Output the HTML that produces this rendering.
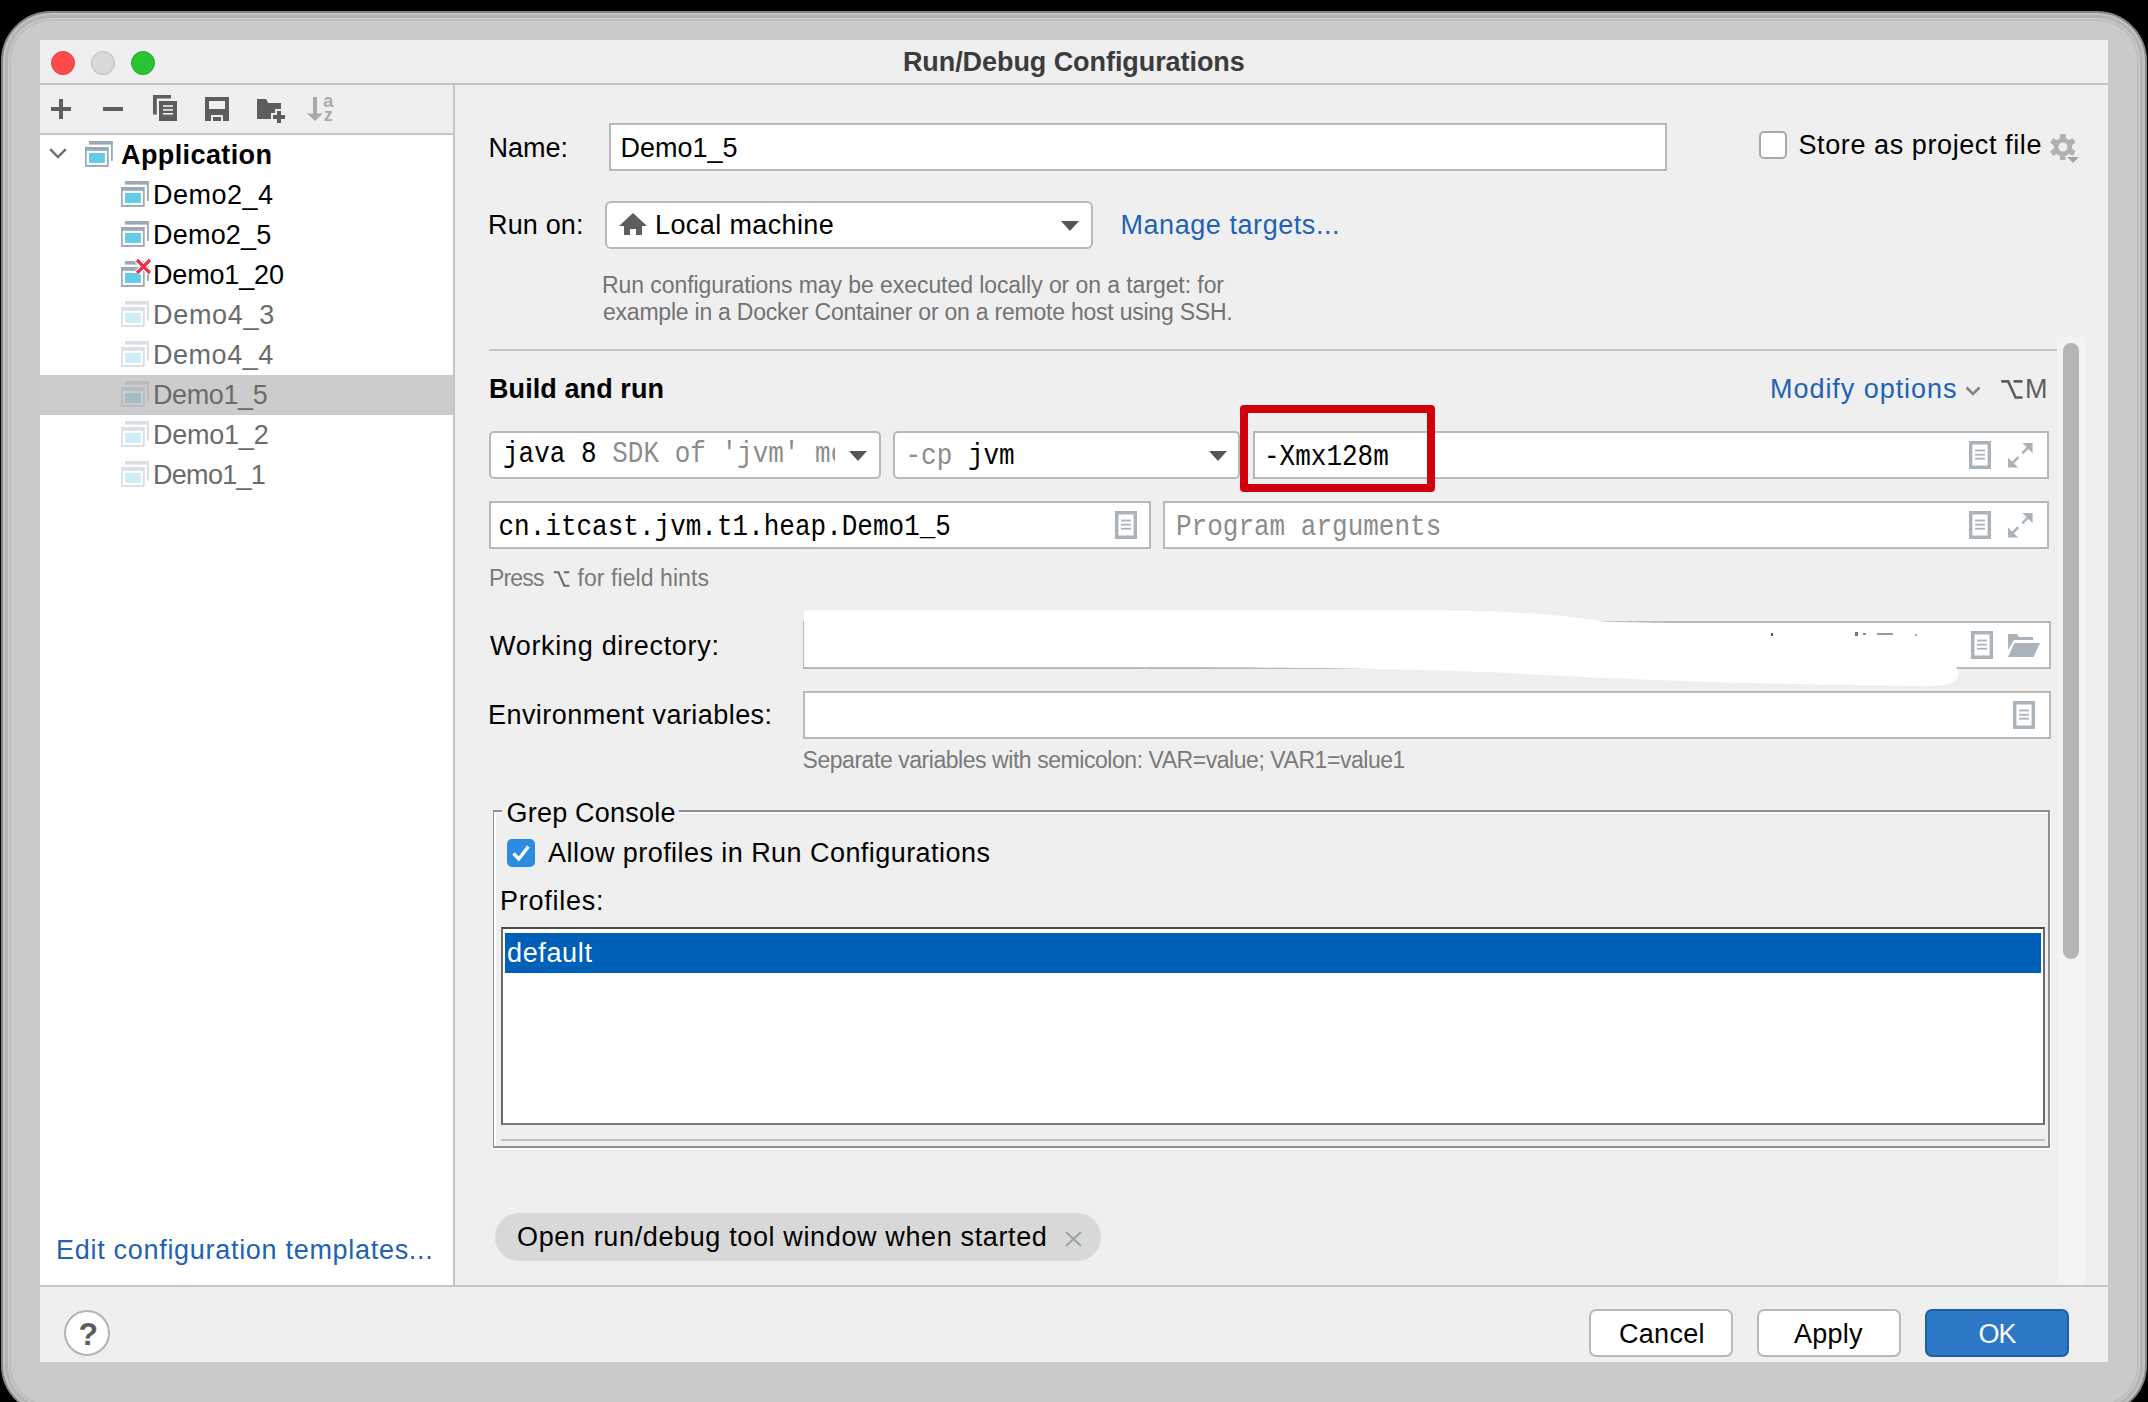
<!DOCTYPE html>
<html><head><meta charset="utf-8"><title>Run/Debug Configurations</title>
<style>
html,body{margin:0;padding:0;background:#000;}
#root{position:relative;width:2148px;height:1402px;overflow:hidden;background:#000;font-family:"Liberation Sans", sans-serif;}
.t{position:absolute;white-space:pre;}
.r{position:absolute;box-sizing:border-box;}
svg.r{overflow:visible;}
</style></head><body><div id="root">
<div class="r" style="left:1px;top:11px;width:2146px;height:1404px;background:#cacaca;border-radius:50px;border:2px solid #858585;box-shadow:inset 0 0 0 2px #c2c2c2, inset 0 0 0 5px #b4b4b4, inset 0 0 0 6px #cdcdcd, inset 0 0 0 8px #bdbdbd;"></div>
<div class="r" style="left:40px;top:40px;width:2068px;height:1322px;background:#efefef;"></div>
<div class="r" style="left:40px;top:83px;width:2068px;height:2px;background:#c6c6c6;"></div>
<div class="r" style="left:51px;top:51px;width:24px;height:24px;border-radius:50%;background:#fd4a4a;border:1px solid #e2403c;"></div>
<div class="r" style="left:91px;top:51px;width:24px;height:24px;border-radius:50%;background:#d9d9d9;border:1px solid #b9b9b9;"></div>
<div class="r" style="left:131px;top:51px;width:24px;height:24px;border-radius:50%;background:#28c432;border:1px solid #1fa82a;"></div>
<div class="t" style="left:902.9px;top:48.54px;font-size:27px;line-height:27px;font-family:'Liberation Sans', sans-serif;font-weight:bold;color:#3c3c3c;letter-spacing:-0.06799999999999999px;">Run/Debug Configurations</div>
<div class="r" style="left:40px;top:133px;width:413px;height:2px;background:#c6c6c6;"></div>
<div class="r" style="left:40px;top:135px;width:413px;height:1150px;background:#fff;"></div>
<div class="r" style="left:453px;top:85px;width:2px;height:1200px;background:#c6c6c6;"></div>
<svg class="r" style="left:51px;top:99px" width="20" height="20" viewBox="0 0 20 20"><rect x="8" y="0" width="4" height="20" fill="#5d5d5d"/><rect x="0" y="8" width="20" height="4" fill="#5d5d5d"/></svg>
<svg class="r" style="left:103px;top:107px" width="20" height="4" viewBox="0 0 20 4"><rect x="0" y="0" width="20" height="4" fill="#5d5d5d"/></svg>
<svg class="r" style="left:153px;top:95px" width="24" height="26" viewBox="0 0 24 26"><path d="M0 0H18V3.6H3.8V19.6H0Z" fill="#5d5d5d"/><rect x="6" y="6" width="18" height="20" fill="#5d5d5d"/><rect x="10" y="10.2" width="10" height="1.6" fill="#efefef"/><rect x="10" y="14.1" width="10" height="1.6" fill="#efefef"/><rect x="10" y="18" width="10" height="1.6" fill="#efefef"/></svg>
<svg class="r" style="left:205px;top:97px" width="24" height="24" viewBox="0 0 24 24"><path d="M0 0H24V24H18V18H6V24H0Z" fill="#5d5d5d"/><rect x="4" y="4" width="16" height="8" fill="#efefef"/><rect x="8" y="20" width="8" height="4" fill="#5d5d5d"/></svg>
<svg class="r" style="left:257px;top:99px" width="30" height="26" viewBox="0 0 30 26"><path d="M0 0H9L11.2 4H24V10.1H18V14H14V20H0Z" fill="#5d5d5d"/><rect x="20" y="12" width="4" height="12" fill="#5d5d5d"/><rect x="16" y="16" width="12" height="4" fill="#5d5d5d"/></svg>
<svg class="r" style="left:305px;top:96px" width="30" height="26" viewBox="0 0 30 26"><rect x="8" y="1" width="4" height="18" fill="#aaaaaa"/><path d="M2 17.5H18L10 25Z" fill="#aaaaaa"/><text x="18.3" y="10.9" font-family="Liberation Sans" font-weight="bold" font-size="18" fill="#aaaaaa">a</text><text x="18.8" y="25" font-family="Liberation Sans" font-weight="bold" font-size="18" fill="#aaaaaa">z</text></svg>
<svg class="r" style="left:49px;top:148px" width="18" height="11" viewBox="0 0 18 11"><path d="M1.2 1.2L9 9L16.8 1.2" fill="none" stroke="#6e6e6e" stroke-width="2.4"/></svg>
<svg class="r" style="left:85px;top:141px" width="28" height="26" viewBox="0 0 28 26"><rect x="4" y="0" width="23.8" height="3.6" fill="#9aa9b3"/><rect x="26" y="0" width="1.8" height="19.8" fill="#9aa9b3"/><rect x="0" y="6" width="23.7" height="19.9" fill="#9aa9b3"/><rect x="1.7" y="9.8" width="20.3" height="14.2" fill="#fff"/><rect x="4" y="12" width="15.9" height="9.9" fill="#62cbe9"/></svg>
<div class="t" style="left:121.0px;top:141.94px;font-size:27px;line-height:27px;font-family:'Liberation Sans', sans-serif;font-weight:bold;color:#000;letter-spacing:0.4px;">Application</div>
<svg class="r" style="left:121px;top:181px" width="28" height="26" viewBox="0 0 28 26"><rect x="4" y="0" width="23.8" height="3.6" fill="#9aa9b3"/><rect x="26" y="0" width="1.8" height="19.8" fill="#9aa9b3"/><rect x="0" y="6" width="23.7" height="19.9" fill="#9aa9b3"/><rect x="1.7" y="9.8" width="20.3" height="14.2" fill="#fff"/><rect x="4" y="12" width="15.9" height="9.9" fill="#62cbe9"/></svg>
<div class="t" style="left:153.0px;top:182.04px;font-size:27px;line-height:27px;font-family:'Liberation Sans', sans-serif;color:#000;letter-spacing:0.48px;">Demo2_4</div>
<svg class="r" style="left:121px;top:221px" width="28" height="26" viewBox="0 0 28 26"><rect x="4" y="0" width="23.8" height="3.6" fill="#9aa9b3"/><rect x="26" y="0" width="1.8" height="19.8" fill="#9aa9b3"/><rect x="0" y="6" width="23.7" height="19.9" fill="#9aa9b3"/><rect x="1.7" y="9.8" width="20.3" height="14.2" fill="#fff"/><rect x="4" y="12" width="15.9" height="9.9" fill="#62cbe9"/></svg>
<div class="t" style="left:153.0px;top:222.04px;font-size:27px;line-height:27px;font-family:'Liberation Sans', sans-serif;color:#000;letter-spacing:0.21300000000000002px;">Demo2_5</div>
<svg class="r" style="left:121px;top:261px" width="28" height="26" viewBox="0 0 28 26"><rect x="4" y="0" width="23.8" height="3.6" fill="#9aa9b3"/><rect x="26" y="0" width="1.8" height="19.8" fill="#9aa9b3"/><rect x="0" y="6" width="23.7" height="19.9" fill="#9aa9b3"/><rect x="1.7" y="9.8" width="20.3" height="14.2" fill="#fff"/><rect x="4" y="12" width="15.9" height="9.9" fill="#62cbe9"/></svg>
<div class="t" style="left:153.0px;top:262.04px;font-size:27px;line-height:27px;font-family:'Liberation Sans', sans-serif;color:#000;letter-spacing:-0.16199999999999998px;">Demo1_20</div>
<svg class="r" style="left:134px;top:257px" width="19" height="19" viewBox="0 0 19 19"><path d="M3 3L16 16M16 3L3 16" stroke="#fff" stroke-width="6"/><path d="M3 3L16 16M16 3L3 16" stroke="#e5344e" stroke-width="3.2"/></svg>
<svg class="r" style="left:121px;top:301px" width="28" height="26" viewBox="0 0 28 26"><rect x="4" y="0" width="23.8" height="3.6" fill="#d9dfe3"/><rect x="26" y="0" width="1.8" height="19.8" fill="#d9dfe3"/><rect x="0" y="6" width="23.7" height="19.9" fill="#d9dfe3"/><rect x="1.7" y="9.8" width="20.3" height="14.2" fill="#fff"/><rect x="4" y="12" width="15.9" height="9.9" fill="#cdeef8"/></svg>
<div class="t" style="left:153.0px;top:302.04px;font-size:27px;line-height:27px;font-family:'Liberation Sans', sans-serif;color:#6b6b6b;letter-spacing:0.7010000000000001px;">Demo4_3</div>
<svg class="r" style="left:121px;top:341px" width="28" height="26" viewBox="0 0 28 26"><rect x="4" y="0" width="23.8" height="3.6" fill="#d9dfe3"/><rect x="26" y="0" width="1.8" height="19.8" fill="#d9dfe3"/><rect x="0" y="6" width="23.7" height="19.9" fill="#d9dfe3"/><rect x="1.7" y="9.8" width="20.3" height="14.2" fill="#fff"/><rect x="4" y="12" width="15.9" height="9.9" fill="#cdeef8"/></svg>
<div class="t" style="left:153.0px;top:342.04px;font-size:27px;line-height:27px;font-family:'Liberation Sans', sans-serif;color:#6b6b6b;letter-spacing:0.534px;">Demo4_4</div>
<div class="r" style="left:40px;top:375px;width:413px;height:40px;background:#cccccc;"></div>
<svg class="r" style="left:121px;top:381px" width="28" height="26" viewBox="0 0 28 26"><rect x="4" y="0" width="23.8" height="3.6" fill="#b4bcc1"/><rect x="26" y="0" width="1.8" height="19.8" fill="#b4bcc1"/><rect x="0" y="6" width="23.7" height="19.9" fill="#b4bcc1"/><rect x="1.7" y="9.8" width="20.3" height="14.2" fill="#cccccc"/><rect x="4" y="12" width="15.9" height="9.9" fill="#a3bcc6"/></svg>
<div class="t" style="left:153.0px;top:382.04px;font-size:27px;line-height:27px;font-family:'Liberation Sans', sans-serif;color:#6b6b6b;letter-spacing:-0.4px;">Demo1_5</div>
<svg class="r" style="left:121px;top:421px" width="28" height="26" viewBox="0 0 28 26"><rect x="4" y="0" width="23.8" height="3.6" fill="#d9dfe3"/><rect x="26" y="0" width="1.8" height="19.8" fill="#d9dfe3"/><rect x="0" y="6" width="23.7" height="19.9" fill="#d9dfe3"/><rect x="1.7" y="9.8" width="20.3" height="14.2" fill="#fff"/><rect x="4" y="12" width="15.9" height="9.9" fill="#cdeef8"/></svg>
<div class="t" style="left:153.0px;top:422.04px;font-size:27px;line-height:27px;font-family:'Liberation Sans', sans-serif;color:#6b6b6b;letter-spacing:-0.234px;">Demo1_2</div>
<svg class="r" style="left:121px;top:461px" width="28" height="26" viewBox="0 0 28 26"><rect x="4" y="0" width="23.8" height="3.6" fill="#d9dfe3"/><rect x="26" y="0" width="1.8" height="19.8" fill="#d9dfe3"/><rect x="0" y="6" width="23.7" height="19.9" fill="#d9dfe3"/><rect x="1.7" y="9.8" width="20.3" height="14.2" fill="#fff"/><rect x="4" y="12" width="15.9" height="9.9" fill="#cdeef8"/></svg>
<div class="t" style="left:153.0px;top:462.04px;font-size:27px;line-height:27px;font-family:'Liberation Sans', sans-serif;color:#6b6b6b;letter-spacing:-0.7px;">Demo1_1</div>
<div class="t" style="left:56.0px;top:1236.64px;font-size:27px;line-height:27px;font-family:'Liberation Sans', sans-serif;color:#2162b6;letter-spacing:0.7030000000000001px;">Edit configuration templates...</div>
<div class="t" style="left:488.4px;top:134.64px;font-size:27px;line-height:27px;font-family:'Liberation Sans', sans-serif;color:#000;letter-spacing:0.030000000000000027px;">Name:</div>
<div class="r" style="left:609px;top:123px;width:1058px;height:48px;background:#fff;border:2px solid #b8b8b8;"></div>
<div class="t" style="left:620.5px;top:134.64px;font-size:27px;line-height:27px;font-family:'Liberation Sans', sans-serif;color:#000;letter-spacing:0.0px;">Demo1_5</div>
<div class="r" style="left:1759px;top:131px;width:28px;height:28px;background:#fff;border:2px solid #a9a9a9;border-radius:5px;"></div>
<div class="t" style="left:1798.5px;top:132.04px;font-size:27px;line-height:27px;font-family:'Liberation Sans', sans-serif;color:#000;letter-spacing:0.59px;">Store as project file</div>
<svg class="r" style="left:2050px;top:134px" width="30" height="30" viewBox="0 0 30 30"><g transform="translate(12.9,13)" fill="#b0b0b0"><circle r="9.3"/><path d="M-2.6 -13H2.6L3.3 -7H-3.3Z" transform="rotate(0)"/><path d="M-2.6 -13H2.6L3.3 -7H-3.3Z" transform="rotate(60)"/><path d="M-2.6 -13H2.6L3.3 -7H-3.3Z" transform="rotate(120)"/><path d="M-2.6 -13H2.6L3.3 -7H-3.3Z" transform="rotate(180)"/><path d="M-2.6 -13H2.6L3.3 -7H-3.3Z" transform="rotate(240)"/><path d="M-2.6 -13H2.6L3.3 -7H-3.3Z" transform="rotate(300)"/><circle r="4.6" fill="#efefef"/></g><path d="M17.1 23.1H28.8L23 29Z" fill="#efefef" stroke="#efefef" stroke-width="2.4"/><path d="M17.1 23.1H28.8L23 29Z" fill="#a3a3a3"/></svg>
<div class="t" style="left:488.0px;top:212.14px;font-size:27px;line-height:27px;font-family:'Liberation Sans', sans-serif;color:#000;letter-spacing:0.1499999999999999px;">Run on:</div>
<div class="r" style="left:605px;top:201px;width:488px;height:48px;background:#fff;border:2px solid #b8b8b8;border-radius:6px;"></div>
<svg class="r" style="left:619px;top:213px" width="28" height="22" viewBox="0 0 28 22"><path d="M14 0L28 13H23V22H17V16H11V22H5V13H0Z" fill="#5d5d5d"/></svg>
<div class="t" style="left:655.1px;top:212.14px;font-size:27px;line-height:27px;font-family:'Liberation Sans', sans-serif;color:#000;letter-spacing:0.373px;">Local machine</div>
<svg class="r" style="left:1061px;top:221px" width="18" height="10" viewBox="0 0 18 10"><path d="M0 0H18L9 10Z" fill="#555"/></svg>
<div class="t" style="left:1120.5px;top:212.34px;font-size:27px;line-height:27px;font-family:'Liberation Sans', sans-serif;color:#2162b6;letter-spacing:0.556px;">Manage targets...</div>
<div class="t" style="left:602.0px;top:273.83px;font-size:23px;line-height:23px;font-family:'Liberation Sans', sans-serif;color:#737373;letter-spacing:-0.07300000000000001px;">Run configurations may be executed locally or on a target: for</div>
<div class="t" style="left:603.0px;top:301.43px;font-size:23px;line-height:23px;font-family:'Liberation Sans', sans-serif;color:#737373;letter-spacing:-0.22700000000000004px;">example in a Docker Container or on a remote host using SSH.</div>
<div class="r" style="left:489px;top:349px;width:1568px;height:2px;background:#c6c6c6;"></div>
<div class="r" style="left:2057px;top:337px;width:28px;height:948px;background:#f3f3f3;"></div>
<div class="r" style="left:2063px;top:343px;width:16px;height:616px;background:#b5b5b5;border-radius:8px;"></div>
<div class="t" style="left:489.0px;top:375.84px;font-size:27px;line-height:27px;font-family:'Liberation Sans', sans-serif;font-weight:bold;color:#000;letter-spacing:0.08100000000000002px;">Build and run</div>
<div class="t" style="left:1770.0px;top:376.44px;font-size:27px;line-height:27px;font-family:'Liberation Sans', sans-serif;color:#2162b6;letter-spacing:0.9560000000000001px;">Modify options</div>
<svg class="r" style="left:1965px;top:386px" width="16" height="10" viewBox="0 0 16 10"><path d="M1.5 1.5L8 8L14.5 1.5" fill="none" stroke="#7c868c" stroke-width="2.6"/></svg>
<svg class="r" style="left:2000px;top:379px" width="24" height="21" viewBox="0 0 24 21"><path d="M2.3 2.4H8.2L15.6 18.5H21.5M14.6 2.4H21.5" fill="none" stroke="#5e5e5e" stroke-width="2.6" stroke-linecap="round"/></svg>
<div class="t" style="left:2025.0px;top:375.94px;font-size:27px;line-height:27px;font-family:'Liberation Sans', sans-serif;color:#5e5e5e;letter-spacing:0.0px;">M</div>
<div class="r" style="left:489px;top:431px;width:392px;height:48px;background:#fff;border:2px solid #b8b8b8;border-radius:5px;"></div>
<div class="r" style="left:491px;top:433px;width:344px;height:44px;overflow:hidden;"><div class="t" style="left:12px;top:9.3px;font-size:26px;line-height:26px;font-family:'Liberation Mono', monospace;transform-origin:0 19.9px;transform:scaleY(1.1);color:#000;">java 8 <span style="color:#8c8c8c">SDK of 'jvm' module</span></div></div>
<svg class="r" style="left:849px;top:451px" width="18" height="10" viewBox="0 0 18 10"><path d="M0 0H18L9 10Z" fill="#555"/></svg>
<div class="r" style="left:893px;top:431px;width:347px;height:48px;background:#fff;border:2px solid #b8b8b8;border-radius:5px;"></div>
<div class="t" style="left:905.5px;top:444.3px;font-size:26px;line-height:26px;font-family:'Liberation Mono', monospace;transform-origin:0 19.9px;transform:scaleY(1.1);color:#000;"><span style="color:#8c8c8c">-cp</span> jvm</div>
<svg class="r" style="left:1209px;top:451px" width="18" height="10" viewBox="0 0 18 10"><path d="M0 0H18L9 10Z" fill="#555"/></svg>
<div class="r" style="left:1253px;top:431px;width:796px;height:48px;background:#fff;border:2px solid #b8b8b8;"></div>
<div class="t" style="left:1264px;top:444.8px;font-size:26px;line-height:26px;font-family:'Liberation Mono', monospace;transform-origin:0 19.9px;transform:scaleY(1.1);color:#000;">-Xmx128m</div>
<svg class="r" style="left:1969px;top:441px" width="22" height="28" viewBox="0 0 22 28"><path d="M0 0H22V28H0Z M3.4 3.4V24.6H18.6V3.4Z" fill="#a9b3b9" fill-rule="evenodd"/><rect x="6" y="8.6" width="10" height="1.8" fill="#a9b3b9"/><rect x="6" y="12.8" width="10" height="1.8" fill="#a9b3b9"/><rect x="6" y="16.8" width="10" height="1.8" fill="#a9b3b9"/></svg>
<svg class="r" style="left:2008px;top:443px" width="25" height="25" viewBox="0 0 25 25"><path d="M14.4 0H24.6V10.2Z M0 14.4V24.6H10.2Z" fill="#a9b3b9"/><path d="M20.5 4.1L14.2 10.4M4.1 20.5L10.4 14.2" stroke="#a9b3b9" stroke-width="2.5"/></svg>
<div class="r" style="left:1240px;top:405px;width:195px;height:87px;border:8px solid #d0000f;border-radius:4px;"></div>
<div class="r" style="left:489px;top:501px;width:662px;height:48px;background:#fff;border:2px solid #b8b8b8;"></div>
<div class="t" style="left:498.5px;top:514.5px;font-size:26px;line-height:26px;font-family:'Liberation Mono', monospace;transform-origin:0 19.9px;transform:scaleY(1.1);color:#000;">cn.itcast.jvm.t1.heap.Demo1_5</div>
<svg class="r" style="left:1115px;top:511px" width="22" height="28" viewBox="0 0 22 28"><path d="M0 0H22V28H0Z M3.4 3.4V24.6H18.6V3.4Z" fill="#a9b3b9" fill-rule="evenodd"/><rect x="6" y="8.6" width="10" height="1.8" fill="#a9b3b9"/><rect x="6" y="12.8" width="10" height="1.8" fill="#a9b3b9"/><rect x="6" y="16.8" width="10" height="1.8" fill="#a9b3b9"/></svg>
<div class="r" style="left:1163px;top:501px;width:886px;height:48px;background:#fff;border:2px solid #b8b8b8;"></div>
<div class="t" style="left:1176px;top:514.5px;font-size:26px;line-height:26px;font-family:'Liberation Mono', monospace;transform-origin:0 19.9px;transform:scaleY(1.1);color:#8c8c8c;">Program arguments</div>
<svg class="r" style="left:1969px;top:511px" width="22" height="28" viewBox="0 0 22 28"><path d="M0 0H22V28H0Z M3.4 3.4V24.6H18.6V3.4Z" fill="#a9b3b9" fill-rule="evenodd"/><rect x="6" y="8.6" width="10" height="1.8" fill="#a9b3b9"/><rect x="6" y="12.8" width="10" height="1.8" fill="#a9b3b9"/><rect x="6" y="16.8" width="10" height="1.8" fill="#a9b3b9"/></svg>
<svg class="r" style="left:2008px;top:513px" width="25" height="25" viewBox="0 0 25 25"><path d="M14.4 0H24.6V10.2Z M0 14.4V24.6H10.2Z" fill="#a9b3b9"/><path d="M20.5 4.1L14.2 10.4M4.1 20.5L10.4 14.2" stroke="#a9b3b9" stroke-width="2.5"/></svg>
<div class="t" style="left:489.0px;top:567.33px;font-size:23px;line-height:23px;font-family:'Liberation Sans', sans-serif;color:#7a7a7a;letter-spacing:-0.85px;">Press</div>
<svg class="r" style="left:552px;top:570px" width="19" height="18" viewBox="0 0 19 18"><path d="M1.7 2.2H6.4L12.3 15.7H17.3M11.9 2.2H17.3" fill="none" stroke="#6a6a6a" stroke-width="2.1" stroke-linecap="butt"/></svg>
<div class="t" style="left:577.5px;top:567.33px;font-size:23px;line-height:23px;font-family:'Liberation Sans', sans-serif;color:#7a7a7a;letter-spacing:0.072px;">for field hints</div>
<div class="t" style="left:490.0px;top:632.54px;font-size:27px;line-height:27px;font-family:'Liberation Sans', sans-serif;color:#000;letter-spacing:0.699px;">Working directory:</div>
<div class="r" style="left:803px;top:621px;width:1248px;height:48px;background:#fff;border:2px solid #b8b8b8;"></div>
<svg class="r" style="left:1971px;top:631px" width="22" height="28" viewBox="0 0 22 28"><path d="M0 0H22V28H0Z M3.4 3.4V24.6H18.6V3.4Z" fill="#a9b3b9" fill-rule="evenodd"/><rect x="6" y="8.6" width="10" height="1.8" fill="#a9b3b9"/><rect x="6" y="12.8" width="10" height="1.8" fill="#a9b3b9"/><rect x="6" y="16.8" width="10" height="1.8" fill="#a9b3b9"/></svg>
<svg class="r" style="left:2008px;top:634px" width="32" height="24" viewBox="0 0 32 24"><path d="M0 0H9L11 3H25V6H6L0 16Z" fill="#a9b3b9"/><path d="M6.5 9H32L25.5 23H0Z" fill="#a9b3b9"/></svg>
<svg class="r" style="left:803px;top:605px" width="1170" height="90" viewBox="0 0 1170 90"><path d="M1 5.5H640C700 5.5 760 10 800 16.5C830 17.5 880 18.5 1000 19H1152V60C1162 75 1150 81 1125 81C1000 80 850 76 745 70C700 67 600 64 520 63C400 62 200 62 1 62Z" fill="#fff"/><rect x="968" y="28" width="2" height="3" fill="#555"/><rect x="1052" y="27" width="3" height="4" fill="#777"/><rect x="1060" y="28" width="3" height="2" fill="#888"/><rect x="1074" y="28" width="16" height="2" fill="#999"/><rect x="1112" y="29" width="2" height="2" fill="#aaa"/></svg>
<div class="t" style="left:488.0px;top:702.34px;font-size:27px;line-height:27px;font-family:'Liberation Sans', sans-serif;color:#000;letter-spacing:0.449px;">Environment variables:</div>
<div class="r" style="left:803px;top:691px;width:1248px;height:48px;background:#fff;border:2px solid #b8b8b8;"></div>
<svg class="r" style="left:2013px;top:701px" width="22" height="28" viewBox="0 0 22 28"><path d="M0 0H22V28H0Z M3.4 3.4V24.6H18.6V3.4Z" fill="#a9b3b9" fill-rule="evenodd"/><rect x="6" y="8.6" width="10" height="1.8" fill="#a9b3b9"/><rect x="6" y="12.8" width="10" height="1.8" fill="#a9b3b9"/><rect x="6" y="16.8" width="10" height="1.8" fill="#a9b3b9"/></svg>
<div class="t" style="left:802.5px;top:749.33px;font-size:23px;line-height:23px;font-family:'Liberation Sans', sans-serif;color:#7a7a7a;letter-spacing:-0.451px;">Separate variables with semicolon: VAR=value; VAR1=value1</div>
<div class="r" style="left:493px;top:810px;width:1557px;height:338px;border:2px solid #8f8f8f;border-left-width:1px;box-shadow:1px 1.5px 0 #fff, inset 2px 1.5px 0 #fff;"></div>
<div class="r" style="left:502px;top:800px;width:177px;height:24px;background:#efefef;"></div>
<div class="t" style="left:506.5px;top:799.94px;font-size:27px;line-height:27px;font-family:'Liberation Sans', sans-serif;color:#000;letter-spacing:0.215px;">Grep Console</div>
<div class="r" style="left:507px;top:839px;width:28px;height:28px;background:#2b8ce4;border-radius:5px;"></div>
<svg class="r" style="left:507px;top:839px" width="28" height="28" viewBox="0 0 28 28"><path d="M6.5 14.5L11.8 20L21.5 7.5" fill="none" stroke="#fff" stroke-width="3.4"/></svg>
<div class="t" style="left:548.1px;top:839.94px;font-size:27px;line-height:27px;font-family:'Liberation Sans', sans-serif;color:#000;letter-spacing:0.445px;">Allow profiles in Run Configurations</div>
<div class="t" style="left:500.0px;top:888.04px;font-size:27px;line-height:27px;font-family:'Liberation Sans', sans-serif;color:#000;letter-spacing:0.748px;">Profiles:</div>
<div class="r" style="left:501px;top:927px;width:1544px;height:198px;background:#fff;border-top:2px solid #4a4a4a;border-left:2px solid #6a6a6a;border-right:2px solid #6a6a6a;border-bottom:2px solid #777;"></div>
<div class="r" style="left:505px;top:933px;width:1536px;height:40px;background:#0060b8;"></div>
<div class="t" style="left:507.0px;top:940.14px;font-size:27px;line-height:27px;font-family:'Liberation Sans', sans-serif;color:#fff;letter-spacing:0.643px;">default</div>
<div class="r" style="left:501px;top:1139px;width:1544px;height:2px;background:#c0c0c0;"></div>
<div class="r" style="left:495px;top:1213px;width:606px;height:48px;background:#d8d8d8;border-radius:24px;"></div>
<div class="t" style="left:517.0px;top:1224.14px;font-size:27px;line-height:27px;font-family:'Liberation Sans', sans-serif;color:#000;letter-spacing:0.633px;">Open run/debug tool window when started</div>
<svg class="r" style="left:1065px;top:1231px" width="17" height="16" viewBox="0 0 17 16"><path d="M1 1L16 15M16 1L1 15" stroke="#9aa5ab" stroke-width="2.2"/></svg>
<div class="r" style="left:40px;top:1285px;width:2068px;height:2px;background:#c6c6c6;"></div>
<div class="r" style="left:64px;top:1310px;width:46px;height:46px;background:#fff;border:2px solid #b3b3b3;border-radius:50%;"></div>
<div class="t" style="left:78.5px;top:1317.91px;font-size:32px;line-height:32px;font-family:'Liberation Sans', sans-serif;font-weight:bold;color:#5d5d5d;letter-spacing:0px;">?</div>
<div class="r" style="left:1589px;top:1309px;width:144px;height:48px;background:#fff;border:2px solid #b8b8b8;border-radius:7px;"></div>
<div class="t" style="left:1619.0px;top:1321.44px;font-size:27px;line-height:27px;font-family:'Liberation Sans', sans-serif;color:#000;letter-spacing:0.30000000000000004px;">Cancel</div>
<div class="r" style="left:1757px;top:1309px;width:144px;height:48px;background:#fff;border:2px solid #b8b8b8;border-radius:7px;"></div>
<div class="t" style="left:1794.0px;top:1321.44px;font-size:27px;line-height:27px;font-family:'Liberation Sans', sans-serif;color:#000;letter-spacing:0.25px;">Apply</div>
<div class="r" style="left:1925px;top:1309px;width:144px;height:48px;background:#2c78c7;border:2px solid #1f5ea9;border-radius:7px;"></div>
<div class="t" style="left:1978.5px;top:1321.44px;font-size:27px;line-height:27px;font-family:'Liberation Sans', sans-serif;color:#fff;letter-spacing:-1.1px;">OK</div>
</div></body></html>
